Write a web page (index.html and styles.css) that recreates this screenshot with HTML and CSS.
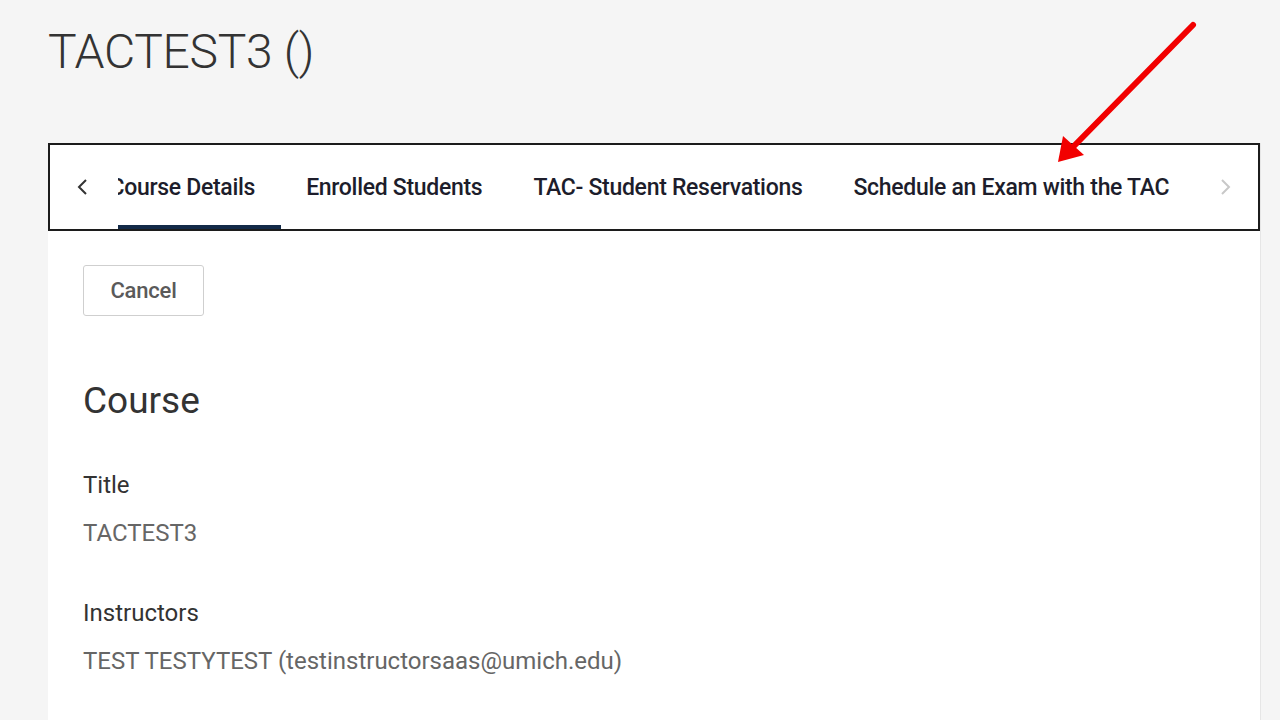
FILE: index.html
```html
<!DOCTYPE html>
<html lang="en">
<head>
<meta charset="utf-8">
<title>TACTEST3</title>
<link rel="stylesheet" href="styles.css">
</head>
<body>
<div class="page">
  <h1 class="page-title">TACTEST3 ()</h1>
  <div class="card">
    <div class="tabs">
      <button class="tab-arrow tab-arrow-left" aria-label="Previous">
        <svg width="14" height="18" viewBox="0 0 14 18"><path d="M10 2 L3 9 L10 16" fill="none" stroke="#333" stroke-width="2"/></svg>
      </button>
      <div class="tab-scroll">
        <div class="tab-list">
          <div class="tab active">Course Details</div>
          <div class="tab">Enrolled Students</div>
          <div class="tab">TAC- Student Reservations</div>
          <div class="tab">Schedule an Exam with the TAC</div>
        </div>
      </div>
      <button class="tab-arrow tab-arrow-right" aria-label="Next">
        <svg width="14" height="18" viewBox="0 0 14 18"><path d="M4 2 L11 9 L4 16" fill="none" stroke="#c8c8c8" stroke-width="2"/></svg>
      </button>
    </div>
    <div class="content">
      <button class="btn">Cancel</button>
      <h2 class="section-title">Course</h2>
      <div class="field">
        <div class="field-label">Title</div>
        <div class="field-value">TACTEST3</div>
      </div>
      <div class="field">
        <div class="field-label">Instructors</div>
        <div class="field-value">TEST TESTYTEST (testinstructorsaas@umich.edu)</div>
      </div>
    </div>
  </div>
</div>
<svg class="annotation" width="1280" height="720" viewBox="0 0 1280 720">
  <line x1="1193" y1="25" x2="1074" y2="146" stroke="#f20000" stroke-width="6" stroke-linecap="round"/>
  <polygon points="1058,162 1063,136 1084,155" fill="#f20000"/>
</svg>
</body>
</html>
```
FILE: styles.css
```css
html, body {
  margin: 0;
  padding: 0;
  background: #f5f5f5;
  font-family: Roboto, "Liberation Sans", Arial, sans-serif;
  height: 720px;
  overflow: hidden;
}
.page {
  padding: 0 19px 0 48px;
}
.page-title {
  margin: 0;
  padding-top: 24px;
  height: 143px;
  box-sizing: border-box;
  font-size: 48px;
  line-height: 56px;
  font-weight: 300;
  color: #333;
  letter-spacing: -0.3px;
}
.card {
  background: #fff;
  border-right: 1px solid #e6e6e6;
  min-height: 600px;
}
.tabs {
  display: flex;
  align-items: stretch;
  height: 88px;
  box-sizing: border-box;
  border: 2px solid #1c1c1c;
  background: #fff;
}
.tab-arrow {
  flex: 0 0 68px;
  border: 0;
  background: transparent;
  padding: 0;
  display: flex;
  align-items: center;
  justify-content: center;
}
.tab-arrow-left { justify-content: flex-start; padding-left: 26px; }
.tab-arrow-right { justify-content: flex-start; padding-left: 28px; }
.tab-scroll {
  flex: 1;
  overflow: hidden;
  display: flex;
}
.tab-list {
  display: flex;
  margin-left: -34px;
}
.tab {
  padding: 0 25.5px;
  display: flex;
  align-items: center;
  font-size: 23px;
  font-weight: 500;
  color: #1d1d2b;
  white-space: nowrap;
  border-bottom: 4px solid transparent;
  padding-top: 4px;
  letter-spacing: -0.3px;
}
.tab.active {
  border-bottom-color: #132a48;
}
.content {
  padding: 34px 35px 40px 35px;
}
.btn {
  display: block;
  width: 121px;
  height: 51px;
  border: 1px solid #cfcfcf;
  border-radius: 3px;
  background: #fff;
  font-family: inherit;
  font-size: 22px;
  font-weight: 500;
  color: #5a5a5a;
  padding: 0;
  letter-spacing: -0.2px;
}
.section-title {
  margin: 63px 0 0 0;
  font-size: 37px;
  line-height: 44px;
  font-weight: 400;
  color: #333;
}
.field {
  margin-top: 47px;
}
.field + .field {
  margin-top: 50px;
}
.field-label {
  font-size: 24px;
  line-height: 30px;
  color: #333;
}
.field-value {
  margin-top: 18px;
  font-size: 24px;
  line-height: 30px;
  color: #666;
  letter-spacing: 0;
}
.annotation {
  position: absolute;
  left: 0;
  top: 0;
  pointer-events: none;
}
```
